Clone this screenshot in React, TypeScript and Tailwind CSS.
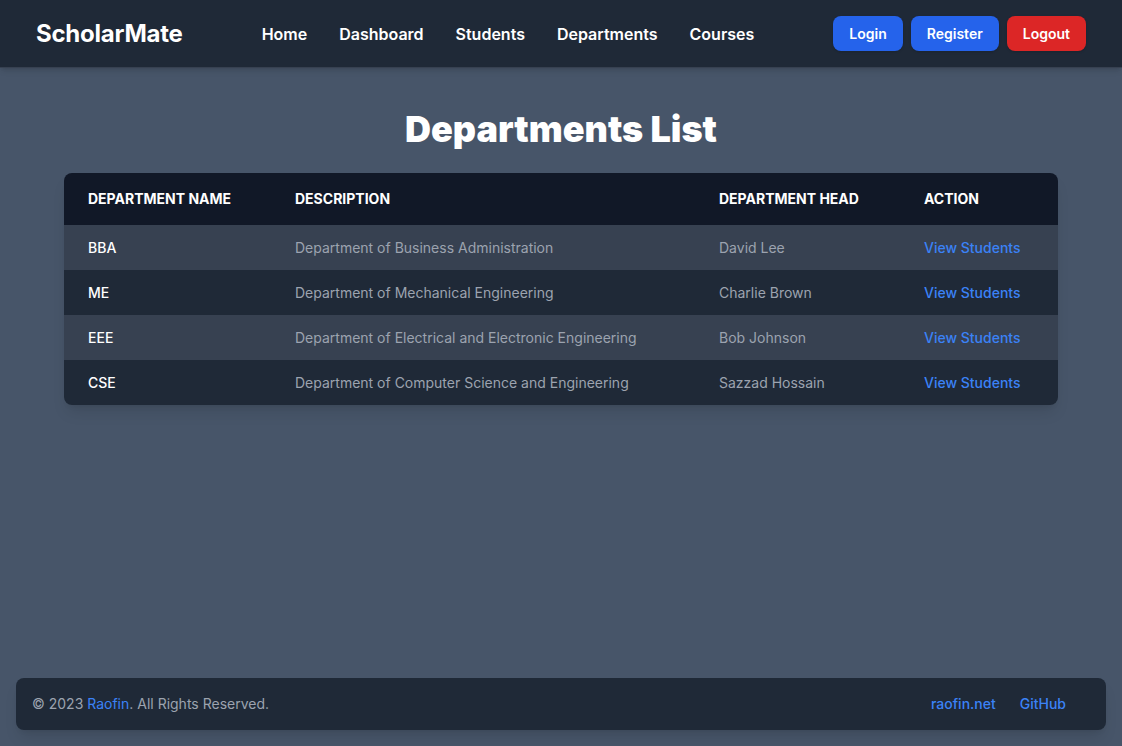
import React from "react";

const rows = [
  { name: "BBA", desc: "Department of Business Administration", head: "David Lee" },
  { name: "ME", desc: "Department of Mechanical Engineering", head: "Charlie Brown" },
  { name: "EEE", desc: "Department of Electrical and Electronic Engineering", head: "Bob Johnson" },
  { name: "CSE", desc: "Department of Computer Science and Engineering", head: "Sazzad Hossain" },
];

export default function App() {
  return (
    <div className="min-h-screen flex flex-col bg-[#475569] font-['Inter',sans-serif]">
      <nav className="h-[68px] bg-[#1f2937] shadow-md flex items-center justify-between px-9 border-b border-[#374151]">
        <div className="text-2xl font-bold text-white tracking-[-0.01em]">ScholarMate</div>
        <div className="flex items-center gap-8 text-white font-semibold text-base">
          <a>Home</a>
          <a>Dashboard</a>
          <a>Students</a>
          <a>Departments</a>
          <a>Courses</a>
        </div>
        <div className="flex items-center gap-2">
          <button className="h-[35px] px-4 rounded-lg bg-[#2563eb] text-white text-sm font-semibold shadow">Login</button>
          <button className="h-[35px] px-4 rounded-lg bg-[#2563eb] text-white text-sm font-semibold shadow">Register</button>
          <button className="h-[35px] px-4 rounded-lg bg-[#dc2626] text-white text-sm font-semibold shadow">Logout</button>
        </div>
      </nav>

      <main className="flex-1 px-16 pt-[41px]">
        <h1 className="text-4xl font-black text-white text-center mb-6">Departments List</h1>
        <div className="rounded-lg overflow-hidden shadow-lg">
          <table className="w-full text-sm text-left table-fixed">
            <thead className="bg-[#111827] text-white uppercase">
              <tr>
                <th className="w-[207px] px-6 py-4 font-bold">Department Name</th>
                <th className="w-[424px] px-6 py-4 font-bold">Description</th>
                <th className="w-[205px] px-6 py-4 font-bold">Department Head</th>
                <th className="px-6 py-4 font-bold">Action</th>
              </tr>
            </thead>
            <tbody>
              {rows.map((r, i) => (
                <tr key={r.name} className={i % 2 === 0 ? "bg-[#374151]" : "bg-[#1f2937]"}>
                  <td className="px-6 py-3 leading-[21px] text-white font-medium">{r.name}</td>
                  <td className="px-6 py-3 leading-[21px] text-[#9ca3af]">{r.desc}</td>
                  <td className="px-6 py-3 leading-[21px] text-[#9ca3af]">{r.head}</td>
                  <td className="px-6 py-3 leading-[21px]">
                    <a className="text-[#3b82f6] font-medium">View Students</a>
                  </td>
                </tr>
              ))}
            </tbody>
          </table>
        </div>
      </main>

      <footer className="m-4 h-[52px] rounded-lg bg-[#1f2937] shadow-lg flex items-center justify-between px-4 text-sm">
        <span className="text-[#9ca3af]">
          © 2023 <a className="text-[#3b82f6]">Raofin</a>. All Rights Reserved.
        </span>
        <ul className="flex items-center font-medium text-[#3b82f6]">
          <li className="mr-6">raofin.net</li>
          <li className="mr-6">GitHub</li>
        </ul>
      </footer>
    </div>
  );
}
